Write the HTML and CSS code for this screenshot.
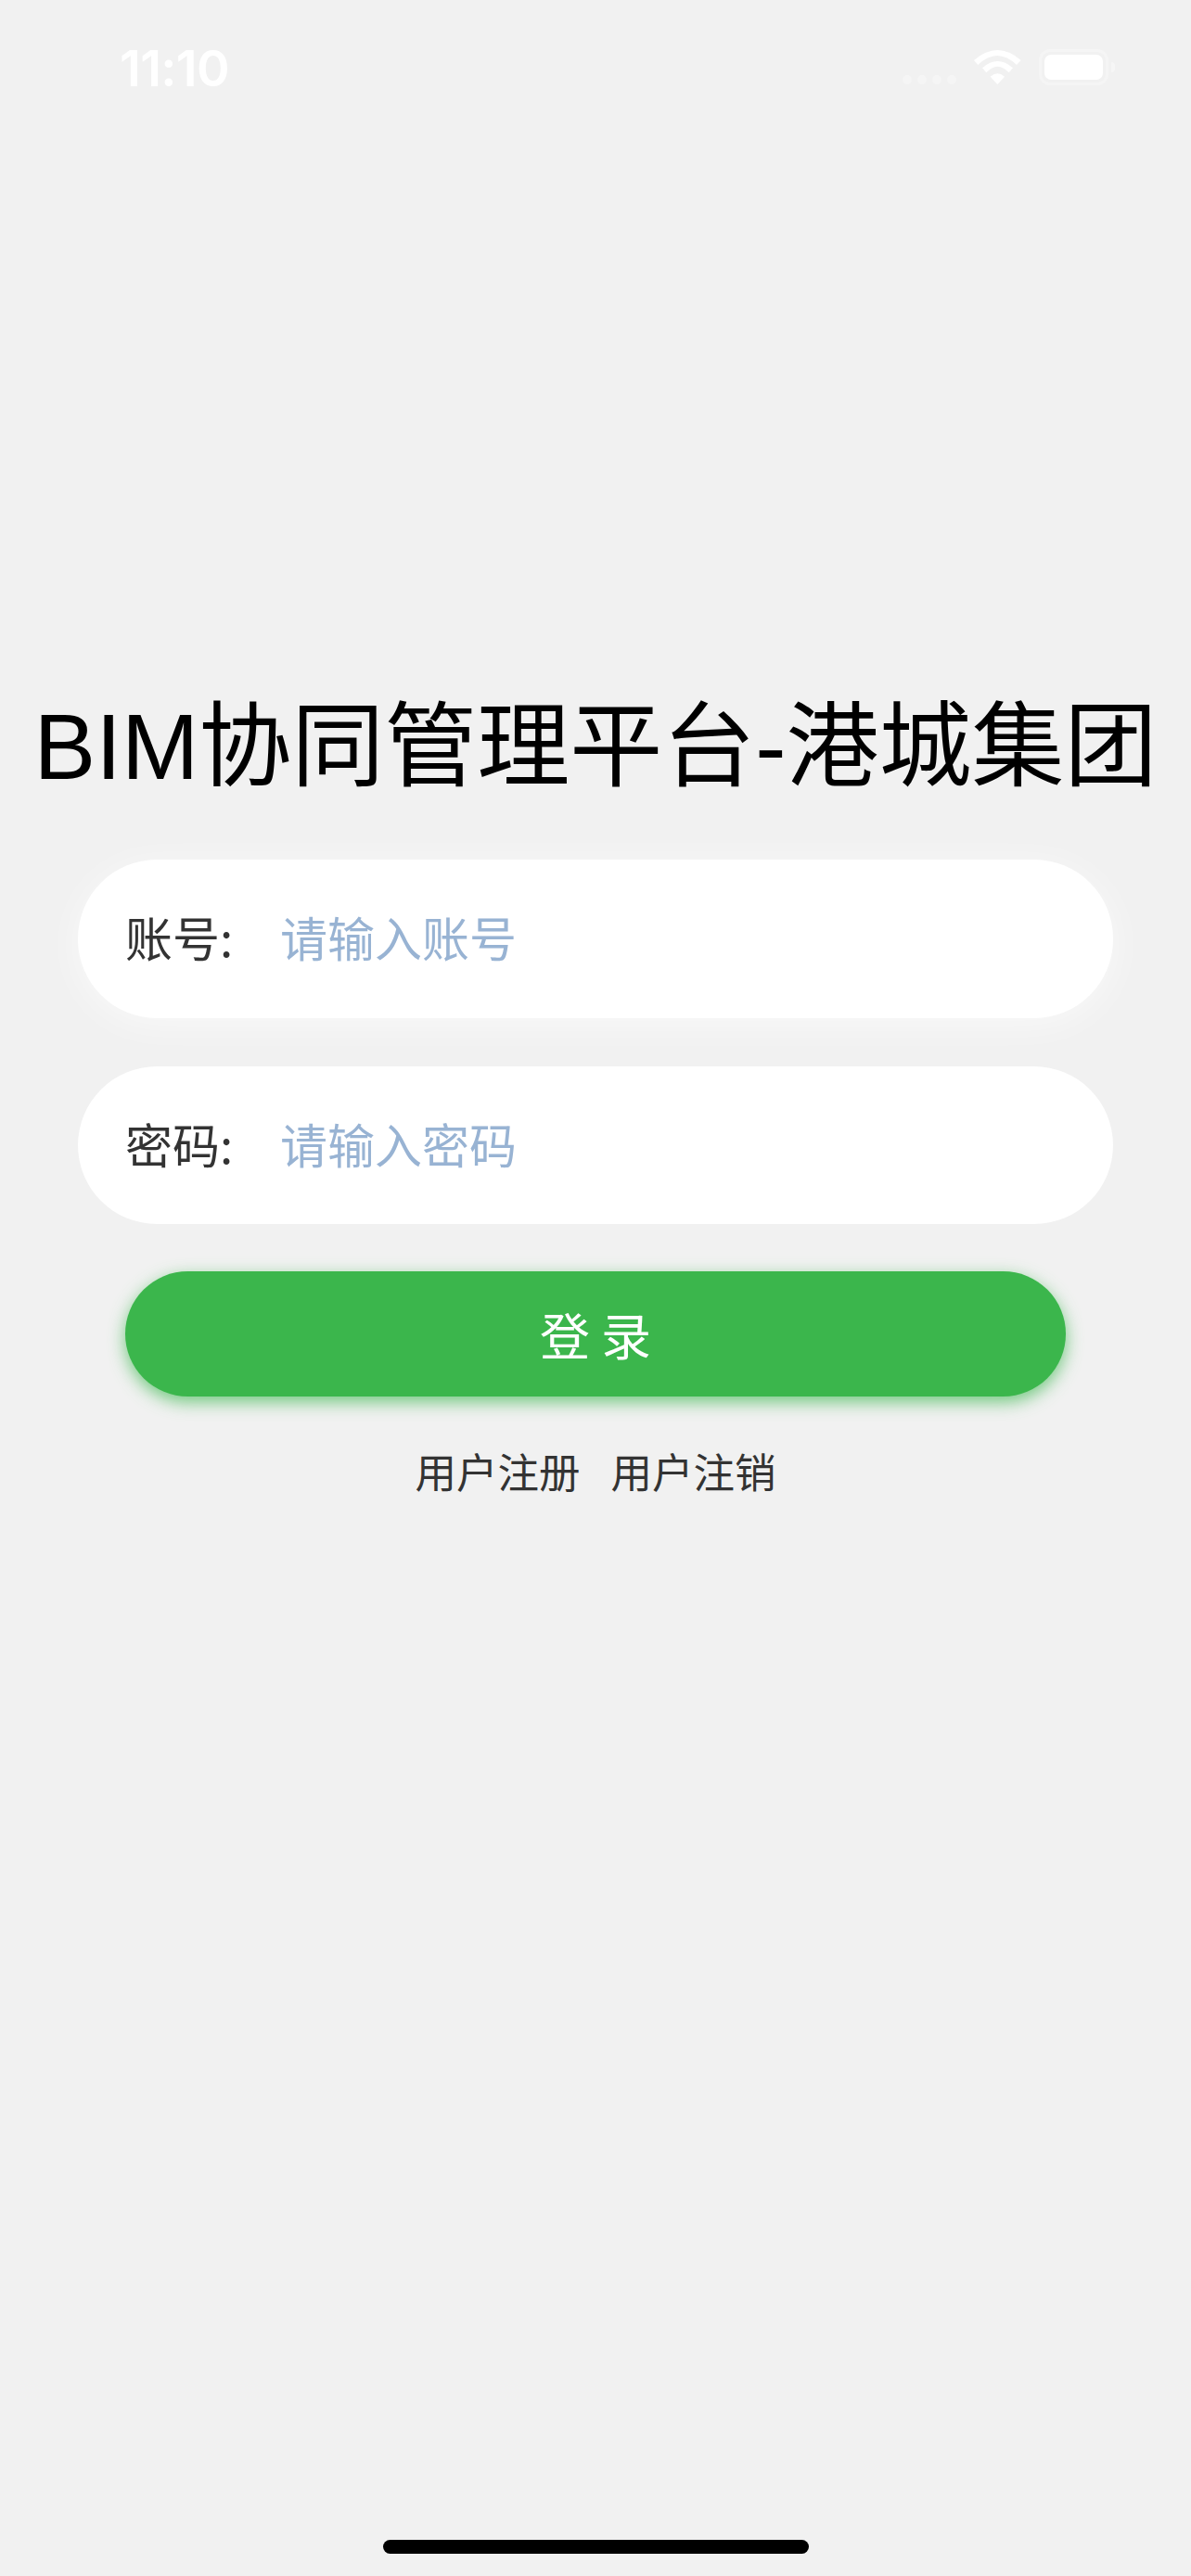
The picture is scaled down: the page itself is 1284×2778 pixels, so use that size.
FILE: index.html
```html
<!DOCTYPE html>
<html lang="zh-CN">
<head>
<meta charset="utf-8">
<title>BIM协同管理平台-港城集团</title>
<link rel="stylesheet" href="styles.css">
</head>
<body>
<div class="screen">
  <header class="status-bar">
    <span class="time">11:10</span>
    <div class="status-icons">
      <div class="signal"><i></i><i></i><i></i><i></i></div>
      <svg class="wifi" width="51" height="37" viewBox="0 0 51 37" aria-hidden="true">
        <path d="M0 11Q25.4-11 50.7 11L46 16Q25.2-4 4.3 16Z"/>
        <path d="M9 19.3Q25.5 4.7 42 19.3L37.7 24.3Q25.5 11.1 13.3 24.3Z"/>
        <path d="M17.7 28.7Q25.4 21.9 33 28.7L25.4 37Z"/>
      </svg>
      <div class="battery"><div class="battery-body"><div class="battery-fill"></div></div><div class="battery-cap"></div></div>
    </div>
  </header>
  <main class="login">
    <h1 class="title">BIM协同管理平台-港城集团</h1>
    <div class="field field-first"><span class="field-label">账号:</span><span class="placeholder">请输入账号</span></div>
    <div class="field field-last"><span class="field-label">密码:</span><span class="placeholder">请输入密码</span></div>
    <button class="submit" type="button">登 录</button>
    <nav class="links"><a>用户注册</a><a>用户注销</a></nav>
  </main>
  <div class="home-indicator"></div>
</div>
</body>
</html>
```
FILE: styles.css
```css
* { box-sizing: border-box; }
html, body { margin: 0; padding: 0; }
body { background: #f1f1f1; font-family: "Noto Sans CJK SC", "Liberation Sans", sans-serif; }
.screen { width: 1284px; height: 2778px; display: flex; flex-direction: column; background: #f1f1f1; overflow: hidden; }

.status-bar { height: 132px; padding: 52px 82px 0 129px; display: flex; justify-content: space-between; align-items: flex-start; flex: none; }
.time { font-family: "Inter", "Liberation Sans", sans-serif; font-size: 54px; line-height: 44px; font-weight: 600; color: #fff; letter-spacing: -0.7px; }
.status-icons { display: flex; align-items: flex-start; padding-top: 1px; }
.signal { display: flex; gap: 6px; margin-top: 28px; margin-right: 19px; }
.signal i { width: 10px; height: 10px; border-radius: 50%; background: #f5f5f5; }
.wifi { fill: #fff; margin-right: 19px; margin-top: 1px; }
.battery { display: flex; align-items: center; gap: 3px; }
.battery-body { width: 75px; height: 39px; border: 3px solid #f5f5f5; border-radius: 12px; padding: 3px; }
.battery-fill { width: 100%; height: 100%; background: #fff; border-radius: 7px; }
.battery-cap { width: 4px; height: 11px; background: #f6f6f6; border-radius: 0 6px 6px 0; }

.login { display: flex; flex-direction: column; align-items: center; flex: 1; padding-top: 613px; }
.title { margin: 0 0 62px; font-size: 100px; line-height: 120px; font-weight: 400; color: #000; white-space: nowrap; font-family: "Liberation Sans", "Noto Sans CJK SC", sans-serif; }
.field { width: 1116px; height: 171px; flex: none; padding: 0 51px 5px; background: #fff; border-radius: 85px; display: flex; align-items: center; margin-bottom: 52px; }
.field-first { box-shadow: 0 6px 40px rgba(255,255,255,.6); }
.field-last { height: 170px; margin-bottom: 51px; }
.field-label { width: 167px; font-size: 51px; line-height: 60px; color: #333; }
.placeholder { font-size: 51px; line-height: 60px; color: #98b3d3; }
.submit { width: 1014px; height: 135px; flex: none; border: 0; border-radius: 68px; background: #3bb64c; color: #fff; font: inherit; font-size: 54px; line-height: 60px; box-shadow: 0 6px 18px rgba(60,184,78,.7); padding: 0; }
.links { margin-top: 52px; display: flex; gap: 33px; font-size: 44.5px; line-height: 56px; color: #333; }

.home-indicator { width: 459px; height: 15px; flex: none; margin: 0 auto 24px; background: #000; border-radius: 8px; }
```
